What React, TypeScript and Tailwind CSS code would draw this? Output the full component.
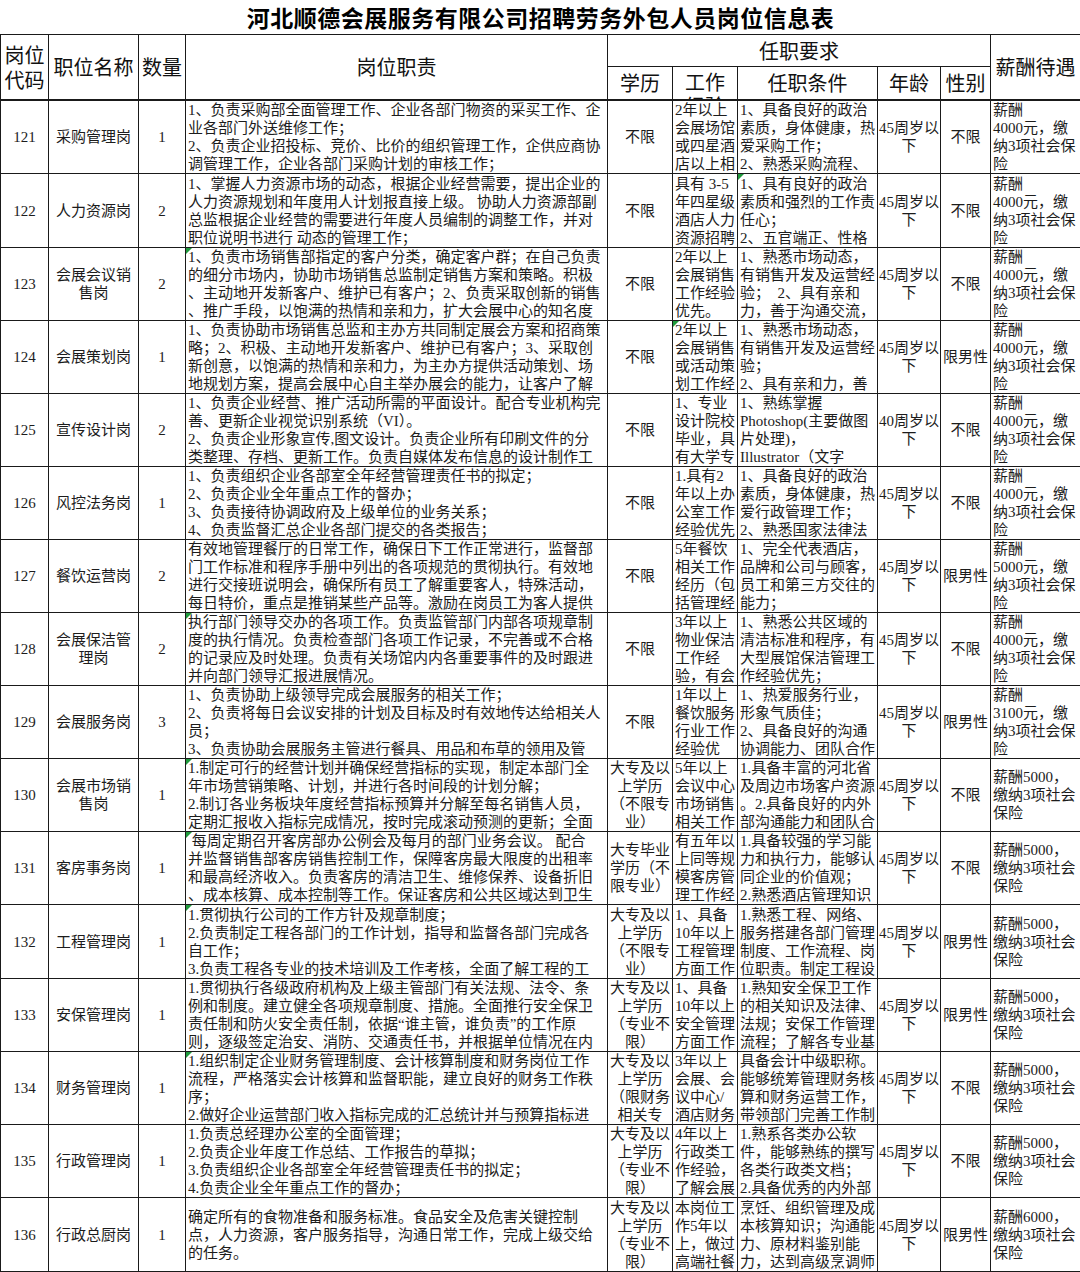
import React from 'react';

type Row = {
  code: string;
  name: string[];
  qty: string;
  duty: string[];
  edu: string[];
  work: string[];
  cond: string[];
  age: string[];
  sex: string;
  pay: string[];
  tall?: boolean;
  marks?: string[]; // columns with the green excel note marker
};

const age45 = ['45周岁以', '下'];
const pay4000 = ['薪酬', '4000元，缴', '纳3项社会保', '险'];
const pay5000 = ['薪酬5000，', '缴纳3项社会', '保险'];
const dazhuan = ['大专及以', '上学历', '（不限专', '业）'];
const dazhuan2 = ['大专及以', '上学历', '（专业不', '限）'];

const rows: Row[] = [
  {
    code: '121', name: ['采购管理岗'], qty: '1',
    duty: [
      '1、负责采购部全面管理工作、企业各部门物资的采买工作、企',
      '业各部门外送维修工作；',
      '2、负责企业招投标、竞价、比价的组织管理工作，企供应商协',
      '调管理工作，企业各部门采购计划的审核工作；',
    ],
    edu: ['不限'], work: ['2年以上', '会展场馆', '或四星酒', '店以上相'],
    cond: ['1、具备良好的政治', '素质，身体健康，热', '爱采购工作；', '2、熟悉采购流程、'],
    age: age45, sex: '不限', pay: pay4000,
  },
  {
    code: '122', name: ['人力资源岗'], qty: '2', tall: true, marks: ['cond'],
    duty: [
      '1、掌握人力资源市场的动态，根据企业经营需要，提出企业的',
      '人力资源规划和年度用人计划报直接上级。 协助人力资源部副',
      '总监根据企业经营的需要进行年度人员编制的调整工作，并对',
      '职位说明书进行 动态的管理工作；',
    ],
    edu: ['不限'], work: ['具有 3-5', '年四星级', '酒店人力', '资源招聘'],
    cond: ['1、具有良好的政治', '素质和强烈的工作责', '任心；', '2、五官端正、性格'],
    age: age45, sex: '不限', pay: pay4000,
  },
  {
    code: '123', name: ['会展会议销', '售岗'], qty: '2', marks: ['duty'],
    duty: [
      '1、负责市场销售部指定的客户分类，确定客户群；在自己负责',
      '的细分市场内，协助市场销售总监制定销售方案和策略。积极',
      '、主动地开发新客户、维护已有客户；2、负责采取创新的销售',
      '、推广手段，以饱满的热情和亲和力，扩大会展中心的知名度',
    ],
    edu: ['不限'], work: ['2年以上', '会展销售', '工作经验', '优先。'],
    cond: ['1、熟悉市场动态，', '有销售开发及运营经', '验；  2、具有亲和', '力，善于沟通交流，'],
    age: age45, sex: '不限', pay: pay4000,
  },
  {
    code: '124', name: ['会展策划岗'], qty: '1', marks: ['work'],
    duty: [
      '1、负责协助市场销售总监和主办方共同制定展会方案和招商策',
      '略；2、积极、主动地开发新客户、维护已有客户；3、采取创',
      '新创意，以饱满的热情和亲和力，为主办方提供活动策划、场',
      '地规划方案，提高会展中心自主举办展会的能力，让客户了解',
    ],
    edu: ['不限'], work: ['2年以上', '会展销售', '或活动策', '划工作经'],
    cond: ['1、熟悉市场动态，', '有销售开发及运营经', '验；', '2、具有亲和力，善'],
    age: age45, sex: '限男性', pay: pay4000,
  },
  {
    code: '125', name: ['宣传设计岗'], qty: '2',
    duty: [
      '1、负责企业经营、推广活动所需的平面设计。配合专业机构完',
      '善、更新企业视觉识别系统（VI）。',
      '2、负责企业形象宣传,图文设计。负责企业所有印刷文件的分',
      '类整理、存档、更新工作。负责自媒体发布信息的设计制作工',
    ],
    edu: ['不限'], work: ['1、专业', '设计院校', '毕业，具', '有大学专'],
    cond: ['1、熟练掌握', 'Photoshop(主要做图', '片处理)，', 'Illustrator（文字'],
    age: ['40周岁以', '下'], sex: '不限', pay: pay4000,
  },
  {
    code: '126', name: ['风控法务岗'], qty: '1',
    duty: [
      '1、负责组织企业各部室全年经营管理责任书的拟定；',
      '2、负责企业全年重点工作的督办；',
      '3、负责接待协调政府及上级单位的业务关系；',
      '4、负责监督汇总企业各部门提交的各类报告；',
    ],
    edu: ['不限'], work: ['1.具有2', '年以上办', '公室工作', '经验优先'],
    cond: ['1、具备良好的政治', '素质，身体健康，热', '爱行政管理工作；', '2、熟悉国家法律法'],
    age: age45, sex: '不限', pay: pay4000,
  },
  {
    code: '127', name: ['餐饮运营岗'], qty: '2',
    duty: [
      '有效地管理餐厅的日常工作，确保日下工作正常进行，监督部',
      '门工作标准和程序手册中列出的各项规范的贯彻执行。有效地',
      '进行交接班说明会，确保所有员工了解重要客人，特殊活动，',
      '每日特价，重点是推销某些产品等。激励在岗员工为客人提供',
    ],
    edu: ['不限'], work: ['5年餐饮', '相关工作', '经历（包', '括管理经'],
    cond: ['1、完全代表酒店，', '品牌和公司与顾客，', '员工和第三方交往的', '能力；'],
    age: age45, sex: '限男性', pay: ['薪酬', '5000元，缴', '纳3项社会保', '险'],
  },
  {
    code: '128', name: ['会展保洁管', '理岗'], qty: '2', marks: ['duty'],
    duty: [
      '执行部门领导交办的各项工作。负责监管部门内部各项规章制',
      '度的执行情况。负责检查部门各项工作记录，不完善或不合格',
      '的记录应及时处理。负责有关场馆内内各重要事件的及时跟进',
      '并向部门领导汇报进展情况。',
    ],
    edu: ['不限'], work: ['3年以上', '物业保洁', '工作经', '验，有会'],
    cond: ['1、熟悉公共区域的', '清洁标准和程序，有', '大型展馆保洁管理工', '作经验优先；'],
    age: age45, sex: '不限', pay: pay4000,
  },
  {
    code: '129', name: ['会展服务岗'], qty: '3',
    duty: [
      '1、负责协助上级领导完成会展服务的相关工作；',
      '2、负责将每日会议安排的计划及目标及时有效地传达给相关人',
      '员；',
      '3、负责协助会展服务主管进行餐具、用品和布草的领用及管',
    ],
    edu: ['不限'], work: ['1年以上', '餐饮服务', '行业工作', '经验优'],
    cond: ['1、热爱服务行业，', '形象气质佳；', '2、具备良好的沟通', '协调能力、团队合作'],
    age: age45, sex: '限男性', pay: ['薪酬', '3100元，缴', '纳3项社会保', '险'],
  },
  {
    code: '130', name: ['会展市场销', '售岗'], qty: '1', marks: ['duty'],
    duty: [
      '1.制定可行的经营计划并确保经营指标的实现，制定本部门全',
      '年市场营销策略、计划，并进行各时间段的计划分解；',
      '2.制订各业务板块年度经营指标预算并分解至每名销售人员，',
      '定期汇报收入指标完成情况，按时完成滚动预测的更新；全面',
    ],
    edu: dazhuan, work: ['5年以上', '会议中心', '市场销售', '相关工作'],
    cond: ['1.具备丰富的河北省', '及周边市场客户资源', '。2.具备良好的内外', '部沟通能力和团队合'],
    age: age45, sex: '不限', pay: pay5000,
  },
  {
    code: '131', name: ['客房事务岗'], qty: '1', marks: ['duty'],
    duty: [
      ' 每周定期召开客房部办公例会及每月的部门业务会议。 配合',
      '并监督销售部客房销售控制工作，保障客房最大限度的出租率',
      '和最高经济收入。负责客房的清洁卫生、维修保养、设备折旧',
      '、成本核算、成本控制等工作。保证客房和公共区域达到卫生',
    ],
    edu: ['大专毕业', '学历（不', '限专业）'], work: ['有五年以', '上同等规', '模客房管', '理工作经'],
    cond: ['1.具备较强的学习能', '力和执行力，能够认', '同企业的价值观；', '2.熟悉酒店管理知识'],
    age: age45, sex: '不限', pay: pay5000,
  },
  {
    code: '132', name: ['工程管理岗'], qty: '1', tall: true, marks: ['duty'],
    duty: [
      '1.贯彻执行公司的工作方针及规章制度；',
      '2.负责制定工程各部门的工作计划，指导和监督各部门完成各',
      '自工作；',
      '3.负责工程各专业的技术培训及工作考核，全面了解工程的工',
    ],
    edu: dazhuan, work: ['1、具备', '10年以上', '工程管理', '方面工作'],
    cond: ['1.熟悉工程、网络、', '服务搭建各部门管理', '制度、工作流程、岗', '位职责。制定工程设'],
    age: age45, sex: '限男性', pay: pay5000,
  },
  {
    code: '133', name: ['安保管理岗'], qty: '1',
    duty: [
      '1.贯彻执行各级政府机构及上级主管部门有关法规、法令、条',
      '例和制度。建立健全各项规章制度、措施。全面推行安全保卫',
      '责任制和防火安全责任制，依据“谁主管，谁负责”的工作原',
      '则，逐级签定治安、消防、交通责任书，并根据单位情况在内',
    ],
    edu: dazhuan2, work: ['1、具备', '10年以上', '安全管理', '方面工作'],
    cond: ['1.熟知安全保卫工作', '的相关知识及法律、', '法规；安保工作管理', '流程；了解各专业基'],
    age: age45, sex: '限男性', pay: pay5000,
  },
  {
    code: '134', name: ['财务管理岗'], qty: '1', marks: ['duty'],
    duty: [
      '1.组织制定企业财务管理制度、会计核算制度和财务岗位工作',
      '流程，严格落实会计核算和监督职能，建立良好的财务工作秩',
      '序；',
      '2.做好企业运营部门收入指标完成的汇总统计并与预算指标进',
    ],
    edu: ['大专及以', '上学历', '（限财务', '相关专'], work: ['3年以上', '会展、会', '议中心/', '酒店财务'],
    cond: ['具备会计中级职称。', '能够统筹管理财务核', '算和财务运营工作，', '带领部门完善工作制'],
    age: age45, sex: '不限', pay: pay5000,
  },
  {
    code: '135', name: ['行政管理岗'], qty: '1',
    duty: [
      '1.负责总经理办公室的全面管理；',
      '2.负责企业年度工作总结、工作报告的草拟；',
      '3.负责组织企业各部室全年经营管理责任书的拟定；',
      '4.负责企业全年重点工作的督办；',
    ],
    edu: dazhuan2, work: ['4年以上', '行政类工', '作经验，', '了解会展'],
    cond: ['1.熟系各类办公软', '件，能够熟练的撰写', '各类行政类文档；', '2.具备优秀的内外部'],
    age: age45, sex: '不限', pay: pay5000,
  },
  {
    code: '136', name: ['行政总厨岗'], qty: '1', tall: true,
    duty: [
      '确定所有的食物准备和服务标准。食品安全及危害关键控制',
      '点，人力资源，客户服务指导，沟通日常工作，完成上级交给',
      '的任务。',
    ],
    edu: dazhuan2, work: ['本岗位工', '作5年以', '上，做过', '高端社餐'],
    cond: ['烹饪、组织管理及成', '本核算知识；沟通能', '力、原材料鉴别能', '力，达到高级烹调师'],
    age: age45, sex: '限男性', pay: ['薪酬6000，', '缴纳3项社会', '保险'],
  },
];

const Mark = () => (
  <span className="absolute left-0 top-0 h-0 w-0 border-t-[6px] border-r-[6px] border-t-[#1f9a3c] border-r-transparent" />
);

const Cell = ({
  lines,
  center,
  tall,
  mark,
}: {
  lines: string[];
  center?: boolean;
  tall?: boolean;
  mark?: boolean;
}) => (
  <td className="relative border border-[#1a1a1a] p-0 align-top">
    {mark && <Mark />}
    <div
      className={`${tall ? 'h-[73px]' : 'h-[72px]'} flex flex-col overflow-hidden [justify-content:safe_center] whitespace-pre leading-[18px] ${
        center ? 'text-center' : 'pl-[2px] text-left'
      }`}
    >
      {lines.map((l, i) => (
        <div key={i}>{l}</div>
      ))}
    </div>
  </td>
);

const hd = 'border border-[#1a1a1a] p-0 text-center align-middle font-normal';

export default function App() {
  return (
    <div className="h-[1272px] w-[1080px] overflow-hidden bg-white text-[#1c1c1c] [font-family:'Liberation_Serif','Noto_Sans_CJK_SC',serif]">
      <table className="w-[1080px] table-fixed border-collapse text-[15px]">
        <colgroup>
          <col className="w-[48px]" />
          <col className="w-[90px]" />
          <col className="w-[47px]" />
          <col className="w-[422px]" />
          <col className="w-[65px]" />
          <col className="w-[65px]" />
          <col className="w-[140px]" />
          <col className="w-[63px]" />
          <col className="w-[50px]" />
          <col className="w-[90px]" />
        </colgroup>
        <thead className="[font-family:'Noto_Sans_CJK_SC',sans-serif] text-[20px] text-[#111]">
          <tr>
            <td colSpan={10} className="border-b border-[#1a1a1a] p-0">
              <div className="flex h-[34px] items-center justify-center text-[23px] font-bold tracking-[0.5px] text-black">
                河北顺德会展服务有限公司招聘劳务外包人员岗位信息表
              </div>
            </td>
          </tr>
          <tr>
            <th rowSpan={2} className={`${hd} border-b-2 leading-[25px]`}>
              岗位<br />代码
            </th>
            <th rowSpan={2} className={`${hd} border-b-2`}>职位名称</th>
            <th rowSpan={2} className={`${hd} border-b-2`}>数量</th>
            <th rowSpan={2} className={`${hd} border-b-2`}>岗位职责</th>
            <th colSpan={5} className={hd}>
              <div className="flex h-[31px] items-center justify-center">任职要求</div>
            </th>
            <th rowSpan={2} className={`${hd} border-b-2`}>薪酬待遇</th>
          </tr>
          <tr>
            <th className={`${hd} border-b-2`}>
              <div className="flex h-[32px] items-center justify-center">学历</div>
            </th>
            <th className={`${hd} border-b-2`}>
              <div className="h-[32px] overflow-hidden pt-[3px] leading-[24px]">
                工作<br />经验
              </div>
            </th>
            <th className={`${hd} border-b-2`}>
              <div className="flex h-[32px] items-center justify-center">任职条件</div>
            </th>
            <th className={`${hd} border-b-2`}>
              <div className="flex h-[32px] items-center justify-center">年龄</div>
            </th>
            <th className={`${hd} border-b-2`}>
              <div className="flex h-[32px] items-center justify-center">性别</div>
            </th>
          </tr>
        </thead>
        <tbody>
          {rows.map((r) => (
            <tr key={r.code}>
              <Cell lines={[r.code]} center tall={r.tall} />
              <Cell lines={r.name} center tall={r.tall} />
              <Cell lines={[r.qty]} center tall={r.tall} />
              <Cell lines={r.duty} tall={r.tall} mark={r.marks?.includes('duty')} />
              <Cell lines={r.edu} center tall={r.tall} />
              <Cell lines={r.work} tall={r.tall} mark={r.marks?.includes('work')} />
              <Cell lines={r.cond} tall={r.tall} mark={r.marks?.includes('cond')} />
              <Cell lines={r.age} center tall={r.tall} />
              <Cell lines={[r.sex]} center tall={r.tall} />
              <Cell lines={r.pay} tall={r.tall} />
            </tr>
          ))}
        </tbody>
      </table>
    </div>
  );
}
